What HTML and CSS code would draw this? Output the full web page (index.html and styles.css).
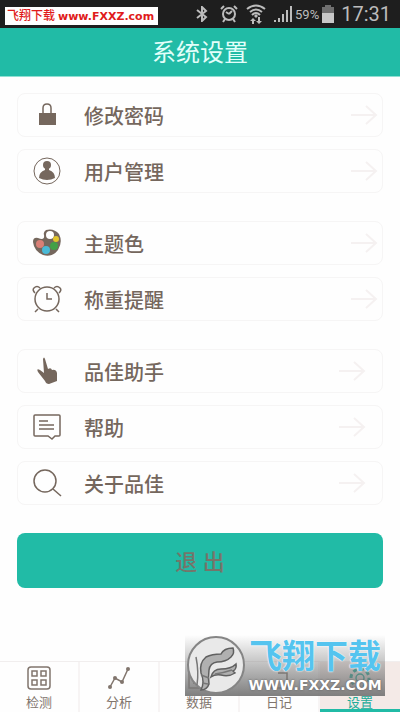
FILE: index.html
```
<!DOCTYPE html>
<html lang="zh-CN">
<head>
<meta charset="UTF-8">
<meta name="viewport" content="width=device-width, initial-scale=1">
<title>系统设置</title>
<link rel="stylesheet" href="styles.css">
</head>
<body>

<svg class="defs" aria-hidden="true">
    <symbol id="arrow" viewBox="0 0 28 24">
        <path d="M1 12H25M16 3L26 12L16 21"/>
    </symbol>
</svg>

<div class="statusbar">
    <div class="site-tag">飞翔下载 <b>www.FXXZ.com</b></div>
    <svg class="st-bt" viewBox="0 0 12 16"><path d="M1 4L10 11L6 15V1L10 5L1 12"/></svg>
    <svg class="st-alarm" viewBox="0 0 18 18"><circle cx="9" cy="9" r="6"/><path d="M9 9L6 7M9 9L12 6M1 4L4 1M17 4L14 1M5 14L3 17M13 14L15 17"/></svg>
    <svg class="st-wifi" viewBox="0 0 20 20"><path d="M1 5Q10 -2 19 5M4 8Q10 3 16 8M6 11Q10 7 14 11"/><path class="solid" d="M8 12L10 10L12 12L10 14ZM7 14L10 17H8V20H6V17H4ZM13 20L10 17H12V13H14V17H16Z"/></svg>
    <svg class="st-signal" viewBox="0 0 18 18"><path d="M1 17V15M5 17V13M9 17V9M13 17V5M17 17V1"/></svg>
    <span class="percent">59%</span>
    <svg class="st-battery" viewBox="0 0 14 18"><path class="empty" d="M4 0H10V2H13V8H1V2H4Z"/><path class="full" d="M1 8H13V18H1Z"/></svg>
    <span class="clock">17:31</span>
</div>

<header class="title">
    <h1>系统设置</h1>
</header>

<main>
    <section class="group">
        <a class="row" href="#password">
            <svg class="icon" viewBox="0 0 30 30"><path d="M11 14V8Q11 4 15 4T19 8V14"/><path class="fill" d="M7 13H24V25H7Z"/></svg>
            <span>修改密码</span>
            <svg class="arrow"><use href="#arrow"/></svg>
        </a>
        <a class="row" href="#users">
            <svg class="icon" viewBox="0 0 30 30"><circle class="hair" cx="15" cy="15" r="13"/><circle class="fill" cx="15" cy="9" r="4"/><path class="fill" d="M13 11H17V14Q23 16 23 22Q15 26 7 22Q7 16 13 14Z"/></svg>
            <span>用户管理</span>
            <svg class="arrow"><use href="#arrow"/></svg>
        </a>
    </section>

    <section class="group">
        <a class="row" href="#theme">
            <svg class="icon" viewBox="0 0 30 30"><path class="fill" d="M14 2Q22 0 27 6Q31 14 26 22Q20 30 11 27Q2 23 1 14Q1 9 6 10Q13 13 12 7Q11 4 14 2Z"/><circle cx="18" cy="7" r="4" fill="#fff" stroke="none"/><circle cx="8" cy="16" r="4" fill="#d97f76" stroke="none"/><circle cx="14" cy="22" r="4" fill="#49b9d6" stroke="none"/><circle cx="22" cy="18" r="4" fill="#43a047" stroke="none"/><circle cx="24" cy="11" r="3" fill="#e2c52c" stroke="none"/></svg>
            <span>主题色</span>
            <svg class="arrow"><use href="#arrow"/></svg>
        </a>
        <a class="row" href="#reminder">
            <svg class="icon" viewBox="0 0 30 30"><circle cx="15" cy="15" r="12"/><path d="M15 9V15H20M6 25L3 28M24 25L27 28M3 9Q0 6 2 4Q5 1 8 4M27 9Q30 6 28 4Q25 1 22 4"/></svg>
            <span>称重提醒</span>
            <svg class="arrow"><use href="#arrow"/></svg>
        </a>
    </section>

    <section class="group inset">
        <a class="row" href="#assistant">
            <svg class="icon" viewBox="0 0 30 30"><path class="fill" d="M11 3Q12 0 13 3L16 13Q19 11 20 14Q24 13 25 17V25L17 28Q14 28 13 25L6 16Q4 12 8 14L12 17Z"/></svg>
            <span>品佳助手</span>
            <svg class="arrow"><use href="#arrow"/></svg>
        </a>
        <a class="row" href="#help">
            <svg class="icon" viewBox="0 0 30 30"><path d="M3 3H27Q28 3 28 4V23Q28 24 27 24H23L20 27L16 24H3Q2 24 2 23V4Q2 3 3 3ZM7 9H16M7 13H22M7 17H22"/></svg>
            <span>帮助</span>
            <svg class="arrow"><use href="#arrow"/></svg>
        </a>
        <a class="row" href="#about">
            <svg class="icon" viewBox="0 0 30 30"><circle cx="13" cy="13" r="11"/><path d="M21 21L29 28"/></svg>
            <span>关于品佳</span>
            <svg class="arrow"><use href="#arrow"/></svg>
        </a>
    </section>

    <button class="logout" type="button">退 出</button>
</main>

<footer>
    <nav class="tabs">
        <a href="#measure"><svg viewBox="0 0 24 24"><rect x="1" y="1" width="22" height="22" rx="3"/><path d="M5 5H10V10H5ZM14 5H19V10H14ZM5 14H10V19H5ZM14 14H19V19H14Z"/></svg>检测</a>
        <a href="#analysis"><svg viewBox="0 0 24 24"><path d="M3 21L8 12L15 16L21 3"/><g class="dots"><circle cx="3" cy="21" r="2"/><circle cx="8" cy="12" r="2"/><circle cx="15" cy="16" r="2"/><circle cx="21" cy="3" r="2"/></g></svg>分析</a>
        <a href="#data"><svg viewBox="0 0 24 24"><path d="M2 2H22V22H2ZM7 18V12M12 18V7M17 18V10"/></svg>数据</a>
        <a href="#diary"><svg viewBox="0 0 24 24"><path d="M4 16V22H20V7H11M20 17L16 22"/></svg>日记</a>
        <a class="active" href="#settings"><svg viewBox="0 0 24 24"><circle cx="12" cy="12" r="4"/><circle class="gear" cx="12" cy="12" r="9"/></svg>设置</a>
    </nav>
    <div class="watermark">
        <svg class="wm-logo" viewBox="0 0 60 60">
            <circle class="disc" cx="31" cy="30" r="28"/>
            <path class="wing" d="M16 55Q20 47 16 38Q14 28 21 22Q27 19 36 19Q39 13 48 13Q50 18 46 22Q41 27 32 27Q25 28 24 35Q23 43 24 49Q22 55 16 55Z"/>
            <path class="wing" d="M26 42Q28 34 36 34Q46 34 51 29Q52 34 48 36L50 38Q44 42 36 40Q30 39 26 42Z"/>
            <path class="line" d="M11 22Q14 37 12 50M30 39Q38 38 47 35M16 40L24 43M17 48L23 49"/>
        </svg>
        <div class="wm-text">
            <strong>飞翔下载</strong>
            <span>WWW.FXXZ.COM</span>
        </div>
    </div>
</footer>

</body>
</html>
```

FILE: styles.css
```
/* --- Base --- */
* { box-sizing:border-box; }

body {
    margin:0;
    min-height:100vh;
    display:flex;
    flex-direction:column;
    background:#fefefe;
    color:#75675d;
    font-family:Roboto, "Noto Sans CJK SC", sans-serif;
}

a { color:inherit; text-decoration:none; }

svg { fill:none; stroke:currentColor; flex:none; }

.defs { position:absolute; width:0; height:0; }

/* --- Status bar --- */
.statusbar {
    display:flex;
    align-items:center;
    height:28px;
    padding:0 9px 0 5px;
    background:#1e1e1e;
    color:#bcbcbc;
}
.statusbar svg { stroke-width:2; }
.site-tag {
    height:18px;
    margin:4px auto 0 0;
    padding:0 4px 0 2px;
    background:#fff;
    color:#e01b1b;
    font-size:12px;
    font-weight:500;
    line-height:18px;
    white-space:nowrap;
}
.site-tag b { font-family:"DejaVu Sans", sans-serif; font-size:11px; }
.st-bt { width:12px; height:16px; margin-right:12px; }
.st-alarm { width:18px; height:18px; margin-right:8px; }
.st-wifi { width:20px; height:20px; margin-right:8px; }
.st-signal { width:18px; height:18px; margin-right:3px; }
.st-battery { width:14px; height:18px; margin:0 6px 0 2px; }
.solid { fill:currentColor; stroke:none; }
.empty { fill:#707070; stroke:none; }
.full { fill:#c8c8c8; stroke:none; }
.percent { font-size:13px; }
.clock { font-size:20px; }

/* --- Title --- */
.title {
    height:49px;
    background:#21bba6;
    border-bottom:1px solid #8fe0d3;
    color:#e2fffa;
    text-align:center;
}
.title h1 { margin:0; font-size:24px; font-weight:400; line-height:50px; }

/* --- Settings list --- */
main {
    flex:1;
    display:flex;
    flex-direction:column;
    gap:28px;
    padding:16px 17px 24px;
}
.group { display:flex; flex-direction:column; gap:12px; }
.row {
    display:flex;
    align-items:center;
    height:44px;
    padding:0 4px 0 14px;
    border:1px solid #f6f5f5;
    border-radius:8px;
    font-size:20px;
    font-weight:500;
}
.inset .row { padding-right:16px; }
.icon { width:30px; height:30px; margin-right:22px; stroke-width:1.5; }
.icon .fill { fill:currentColor; stroke:none; }
.icon .hair { stroke-width:1; }
.arrow {
    width:28px;
    height:24px;
    margin-left:auto;
    color:#f5f1f1;
    stroke-width:2;
}
.logout {
    height:55px;
    padding:0 0 2px;
    border:0;
    border-radius:8px;
    background:#21bba6;
    color:#75756a;
    font:500 22px Roboto, "Noto Sans CJK SC", sans-serif;
}

/* --- Bottom tabs --- */
footer { position:relative; }
.tabs {
    display:grid;
    grid-template-columns:repeat(5, 1fr);
    height:51px;
    border-top:1px solid #f1eeee;
}
.tabs a {
    display:flex;
    flex-direction:column;
    align-items:center;
    gap:4px;
    padding-top:4px;
    border-right:2px solid #f7f4f4;
    color:#81756d;
    font-size:13px;
    line-height:18px;
}
.tabs svg { width:24px; height:24px; stroke-width:1.5; }
.dots { fill:currentColor; stroke:none; }
.tabs .gear { stroke-width:3; stroke-dasharray:4 3; }
.tabs .active {
    border-right:0;
    background:#f4eae7;
    box-shadow:inset 0 -3px #21bba6;
    color:#21ab98;
}

/* --- Watermark over the tabs --- */
.watermark {
    position:absolute;
    right:15px;
    bottom:16px;
    display:flex;
    width:200px;
    height:61px;
    background:linear-gradient(rgba(120,120,120,0), rgba(120,120,120,.95));
}
.wm-logo { width:60px; height:60px; }
.disc { fill:#e9e9e9; stroke:#858585; stroke-width:2; }
.wing { fill:#b0b0b0; stroke:#606060; stroke-width:1.5; }
.line { stroke:#777; stroke-width:1.5; }
.wm-text { display:flex; flex-direction:column; align-items:center; flex:1; white-space:nowrap; }
.wm-text strong {
    color:#55c4ef;
    font-size:33px;
    font-weight:700;
    line-height:43px;
    text-shadow:0 0 2px #fff, 0 0 1px #fff;
}
.wm-text span {
    color:#fff;
    font:700 14px/14px "DejaVu Sans", sans-serif;
    text-shadow:0 0 2px #555;
}
```
